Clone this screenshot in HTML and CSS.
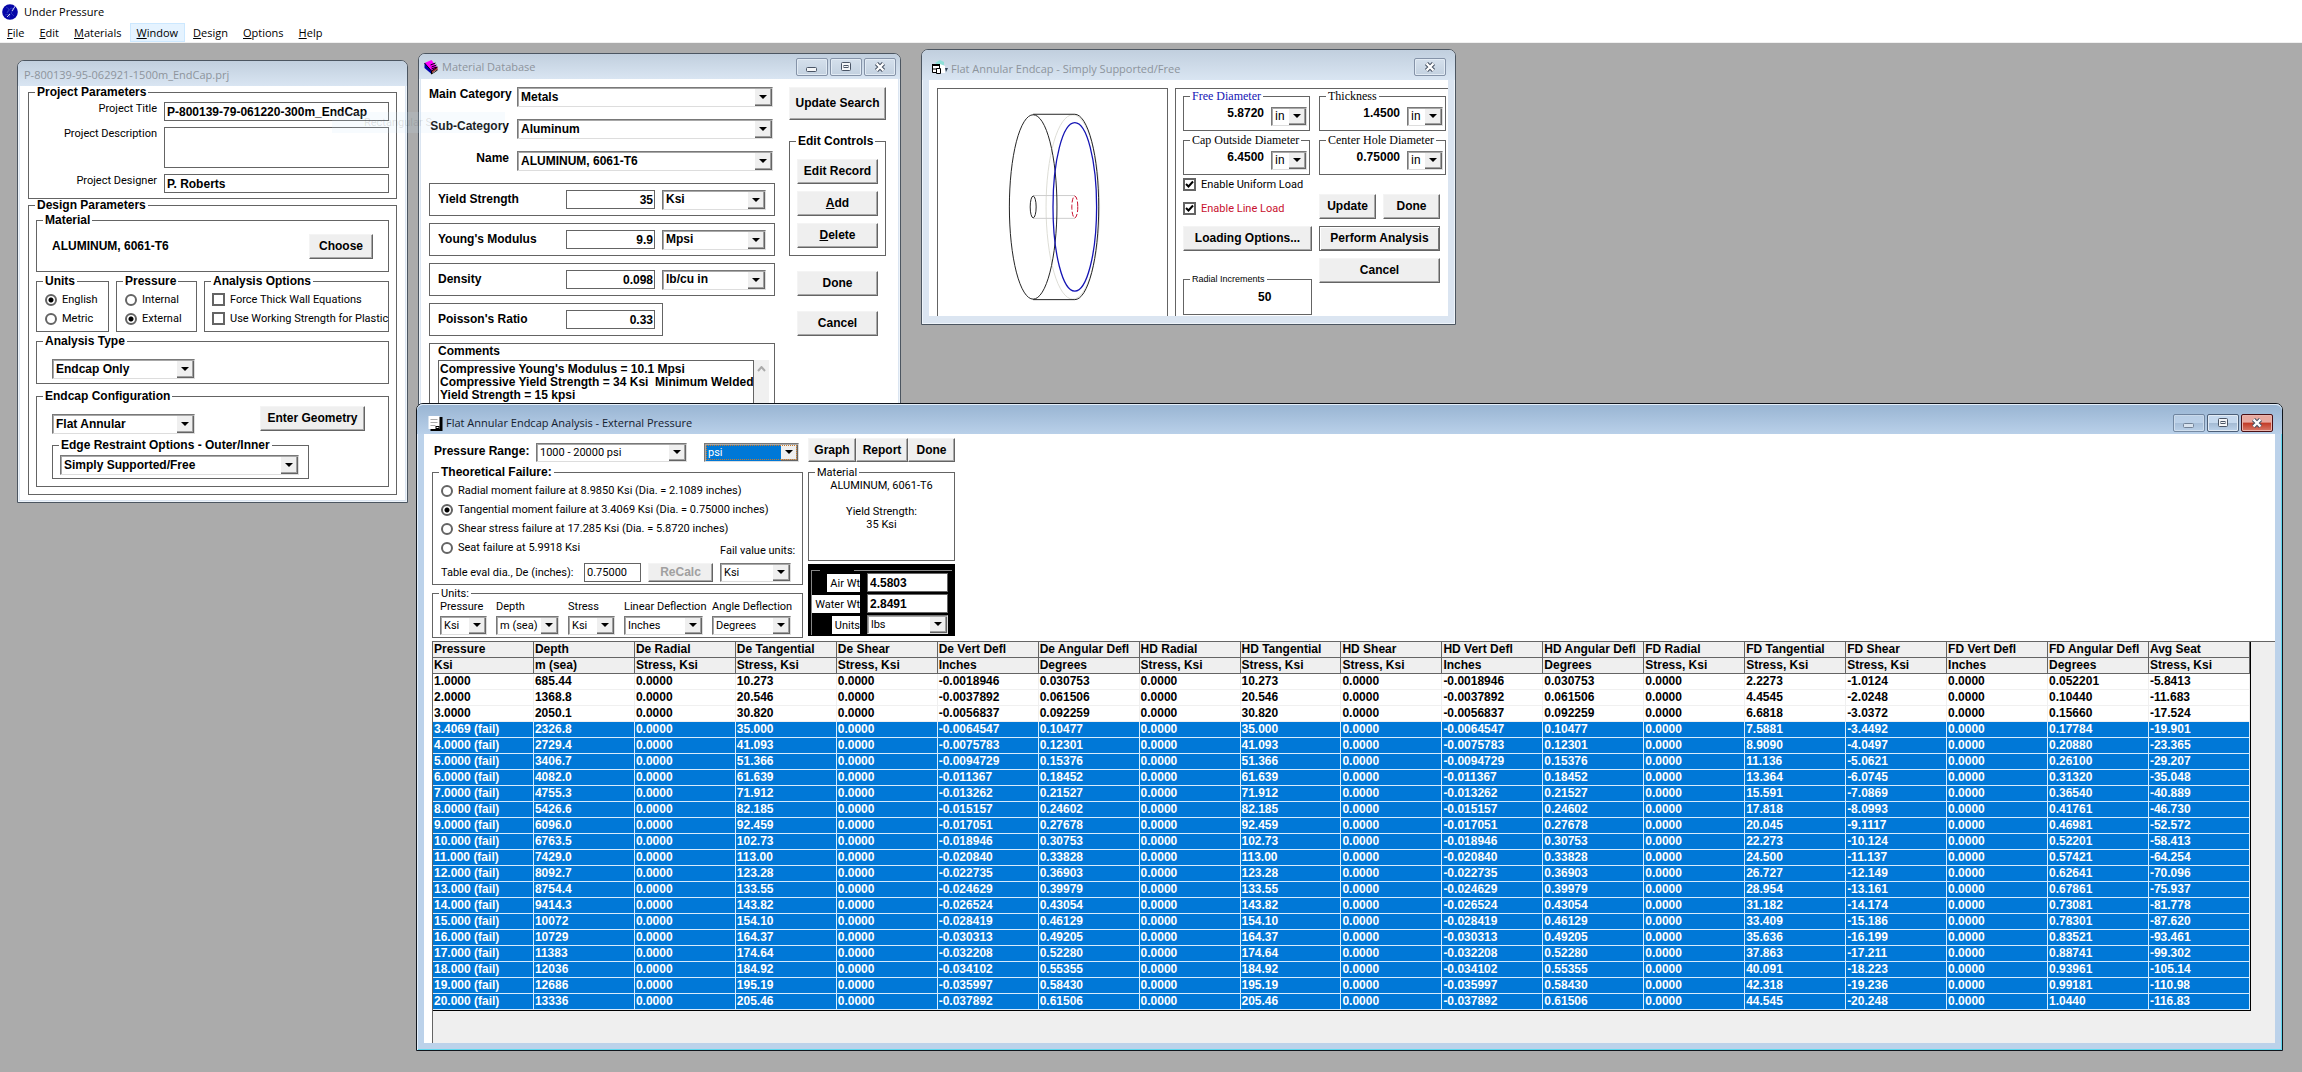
FILE: index.html
```html
<!DOCTYPE html>
<html lang="en">
<head>
<meta charset="utf-8">
<title>Under Pressure</title>
<link rel="stylesheet" href="styles.css">
</head>
<body>
<svg class="defs" aria-hidden="true">
  <symbol id="min" viewBox="0 0 14 12"><rect x="1.5" y="6.5" width="10" height="4" rx="1" fill="#f4f6f8" stroke="#4a5566"/></symbol>
  <symbol id="max" viewBox="0 0 14 12"><rect x="2.5" y="1.5" width="9" height="8" rx="1" fill="#f4f6f8" stroke="#4a5566"/><rect x="5" y="4.5" width="4" height="2" fill="none" stroke="#4a5566"/></symbol>
  <symbol id="cls" viewBox="0 0 14 12"><path d="M3.5 2.5L10.500 9.500M10.500 2.500L3.500 9.500" stroke="#4a5566" stroke-width="4.500"/><path d="M3.500 2.500L10.500 9.500M10.500 2.500L3.500 9.500" stroke="#fff" stroke-width="2.400"/></symbol>
</svg>

<header class="app-bar">
  <svg class="app-icon" viewBox="0 0 16 16"><circle cx="8" cy="8" r="7.800" fill="#0606a8"/><path d="M4 3l3 2-2 4 4-5 3 1-3 4 3 3M3 11l5-1-1 4" fill="none" stroke="#2a38b8"/><path d="M14 1l-4 6M5 13l3-3" stroke="#fff" stroke-width=".8"/></svg>
  <h1>Under Pressure</h1>
</header>
<nav class="menu">
  <button><u>F</u>ile</button><button><u>E</u>dit</button><button><u>M</u>aterials</button><button class="hot"><u>W</u>indow</button><button><u>D</u>esign</button><button><u>O</u>ptions</button><button><u>H</u>elp</button>
</nav>

<main class="desktop">
  <section class="win project">
    <div class="bar"><h2>P-800139-95-062921-1500m_EndCap.prj</h2></div>
    <form class="client">
      <fieldset class="details">
        <legend>Project Parameters</legend>
        <label for="title">Project Title</label><input id="title" value="P-800139-79-061220-300m_EndCap">
        <label for="desc">Project Description</label><textarea id="desc"></textarea>
        <label for="designer">Project Designer</label><input id="designer" value="P. Roberts">
      </fieldset>
      <fieldset class="design">
        <legend>Design Parameters</legend>
        <fieldset class="material-box"><legend>Material</legend><b>ALUMINUM, 6061-T6</b><button type="button">Choose</button></fieldset>
        <div class="trio">
          <fieldset><legend>Units</legend>
            <label class="opt"><input type="radio" name="sys" checked>English</label>
            <label class="opt"><input type="radio" name="sys">Metric</label></fieldset>
          <fieldset><legend>Pressure</legend>
            <label class="opt"><input type="radio" name="press">Internal</label>
            <label class="opt"><input type="radio" name="press" checked>External</label></fieldset>
          <fieldset><legend>Analysis Options</legend>
            <label class="opt"><input type="checkbox">Force Thick Wall Equations</label>
            <label class="opt"><input type="checkbox">Use Working Strength for Plastic</label></fieldset>
        </div>
        <fieldset class="type-box"><legend>Analysis Type</legend><select aria-label="Analysis Type"><option>Endcap Only</option></select></fieldset>
        <fieldset class="endcap-box"><legend>Endcap Configuration</legend>
          <div class="config"><select aria-label="Endcap Configuration"><option>Flat Annular</option></select><button type="button">Enter Geometry</button></div>
          <fieldset class="edge-box"><legend>Edge Restraint Options - Outer/Inner</legend><select aria-label="Edge Restraint"><option>Simply Supported/Free</option></select></fieldset>
        </fieldset>
      </fieldset>
    </form>
  </section>

  <section class="win database">
    <div class="bar">
      <svg class="ico" viewBox="0 0 15 16"><path d="M1 4l7-3 6 8-6 4z" fill="#f0f"/><path d="M1 4v5l7 6v-3z" fill="#00a"/><path d="M8 12l6-4v3l-6 4z" fill="#a33"/><path d="M7 6l5-2M8 8l5-2M8 10l5-2M1 4l7 8 6-4M8 12v3l6-4" fill="none" stroke="#000"/><path d="M9 14l4-3" stroke="#888"/></svg>
      <h2>Material Database</h2>
      <button aria-label="Minimize"><svg><use href="#min"/></svg></button><button aria-label="Maximize"><svg><use href="#max"/></svg></button><button aria-label="Close"><svg><use href="#cls"/></svg></button>
    </div>
    <form class="client">
      <div class="fields">
        <div class="lookup">
          <label for="cat">Main Category</label><select id="cat"><option>Metals</option></select>
          <label for="sub">Sub-Category</label><select id="sub"><option>Aluminum</option></select>
          <label for="name">Name</label><select id="name"><option>ALUMINUM, 6061-T6</option></select>
        </div>
        <div class="prop"><label for="ys">Yield Strength</label><input id="ys" value="35"><select aria-label="Yield unit"><option>Ksi</option></select></div>
        <div class="prop"><label for="ym">Young's Modulus</label><input id="ym" value="9.9"><select aria-label="Modulus unit"><option>Mpsi</option></select></div>
        <div class="prop"><label for="den">Density</label><input id="den" value="0.098"><select aria-label="Density unit"><option>lb/cu in</option></select></div>
        <div class="prop short"><label for="pr">Poisson's Ratio</label><input id="pr" value="0.33"></div>
        <div class="comments"><label for="com">Comments</label>
          <div class="memo"><textarea id="com">Compressive Young's Modulus = 10.1 Mpsi
Compressive Yield Strength = 34 Ksi  Minimum Welded
Yield Strength = 15 kpsi</textarea><div class="scroll"><svg viewBox="0 0 9 6"><path d="M1 5l3.500-4L8 5" fill="none" stroke="#aaa" stroke-width="2"/></svg></div></div></div>
      </div>
      <div class="actions">
        <button type="button" class="search">Update Search</button>
        <fieldset><legend>Edit Controls</legend><button type="button">Edit Record</button><button type="button"><u>A</u>dd</button><button type="button"><u>D</u>elete</button></fieldset>
        <div class="finish"><button type="button">Done</button><button type="button">Cancel</button></div>
      </div>
    </form>
  </section>

  <section class="win geometry">
    <div class="bar">
      <svg class="ico" viewBox="0 0 16 16"><path d="M3 3l5-3 4 2v3L8 7z" fill="#8fe0d8"/><path d="M8 4l5 2v7H8z" fill="#fff"/><path d="M13 8h3l-2 4z" fill="#345"/><path d="M.5 4.500h7v8h-7z" fill="#fff" stroke="#000"/><path d="M0 4h8v2H0z" fill="#000"/><path d="M1 9h4" stroke="#000"/><path d="M4.500 8.500h4v5h-4z" fill="#fff" stroke="#000"/></svg>
      <h2>Flat Annular Endcap - Simply Supported/Free</h2>
      <button aria-label="Close"><svg><use href="#cls"/></svg></button>
    </div>
    <form class="client">
      <div class="sketch">
        <svg viewBox="0 0 231 228" fill="none" stroke="#222">
          <ellipse cx="136" cy="119" rx="27" ry="93" stroke="#ddddd6"/>
          <path d="M96 107.500h42M96 130.500h42" stroke="#ccc"/>
          <path d="M96 25.500h42a24 93 0 0 1 0 187H96"/>
          <ellipse cx="96" cy="119" rx="24" ry="93"/>
          <ellipse cx="96" cy="119" rx="3" ry="11"/>
          <ellipse cx="138" cy="119" rx="22" ry="85" stroke="#1414b4" stroke-width="1.300"/>
          <ellipse cx="138" cy="119" rx="3" ry="11" stroke="#c8102e" stroke-dasharray="5 2"/>
        </svg>
      </div>
      <div class="params">
        <div class="dims">
          <fieldset><legend class="free">Free Diameter</legend><output>5.8720</output><select aria-label="Free Diameter unit"><option>in</option></select></fieldset>
          <fieldset><legend>Thickness</legend><output>1.4500</output><select aria-label="Thickness unit"><option>in</option></select></fieldset>
          <fieldset><legend>Cap Outside Diameter</legend><output>6.4500</output><select aria-label="Outside Diameter unit"><option>in</option></select></fieldset>
          <fieldset><legend>Center Hole Diameter</legend><output>0.75000</output><select aria-label="Hole Diameter unit"><option>in</option></select></fieldset>
        </div>
        <div class="loads">
          <div class="left">
            <label class="opt"><input type="checkbox" checked>Enable Uniform Load</label>
            <label class="opt red"><input type="checkbox" checked>Enable Line Load</label>
            <button type="button">Loading Options...</button>
            <fieldset><legend>Radial Increments</legend><output>50</output></fieldset>
          </div>
          <div class="right">
            <button type="button">Update</button><button type="button">Done</button>
            <button type="button" class="wide main">Perform Analysis</button>
            <button type="button" class="wide">Cancel</button>
          </div>
        </div>
      </div>
    </form>
  </section>

  <section class="win analysis">
    <div class="bar">
      <svg class="ico" viewBox="0 0 15 16"><path d="M3 2h12v14H3z" fill="#000"/><path d="M1 1h11v13H1z" fill="#fff"/><path d="M3 4.500h7M3 7.500h7M3 10.500h5" stroke="#aaa"/><path d="M8 11h4v3H8z" fill="#000"/><path d="M9 12h2v1H9z" fill="#fff"/></svg>
      <h2>Flat Annular Endcap Analysis - External Pressure</h2>
      <button aria-label="Minimize" class="dim"><svg><use href="#min"/></svg></button><button aria-label="Maximize"><svg><use href="#max"/></svg></button><button aria-label="Close" class="close"><svg><use href="#cls"/></svg></button>
    </div>
    <div class="client">
      <form class="controls">
        <div class="main-col">
          <div class="range"><label for="range">Pressure Range:</label><select id="range"><option>1000 - 20000 psi</option></select><span class="picked"><select aria-label="Range unit"><option>psi</option></select></span></div>
          <fieldset class="failure"><legend>Theoretical Failure:</legend>
            <label class="opt"><input type="radio" name="fail">Radial moment failure at 8.9850 Ksi (Dia. = 2.1089 inches)</label>
            <label class="opt"><input type="radio" name="fail" checked>Tangential moment failure at 3.4069 Ksi (Dia. = 0.75000 inches)</label>
            <label class="opt"><input type="radio" name="fail">Shear stress failure at 17.285 Ksi (Dia. = 5.8720 inches)</label>
            <div class="eval">
              <label class="opt"><input type="radio" name="fail">Seat failure at 5.9918 Ksi</label>
              <label for="fvu" class="fvu">Fail value units:</label>
              <div class="recalc"><label for="de">Table eval dia., De (inches):</label><input id="de" value="0.75000"><button type="button" disabled>ReCalc</button></div>
              <select id="fvu"><option>Ksi</option></select>
            </div>
          </fieldset>
          <fieldset class="units"><legend>Units:</legend>
            <label>Pressure<select><option>Ksi</option></select></label>
            <label>Depth<select><option>m (sea)</option></select></label>
            <label>Stress<select><option>Ksi</option></select></label>
            <label>Linear Deflection<select><option>Inches</option></select></label>
            <label>Angle Deflection<select><option>Degrees</option></select></label>
          </fieldset>
        </div>
        <div class="side-col">
          <div class="tools"><button type="button">Graph</button><button type="button">Report</button><button type="button">Done</button></div>
          <fieldset class="summary"><legend>Material</legend><p>ALUMINUM, 6061-T6</p><p>Yield Strength:<br>35 Ksi</p></fieldset>
          <div class="weights">
            <div class="weights-grid">
              <label for="air">Air Wt</label><input id="air" value="4.5803">
              <label for="water">Water Wt</label><input id="water" value="2.8491">
              <label for="wu">Units</label><select id="wu"><option>lbs</option></select>
            </div>
          </div>
        </div>
      </form>
      <div class="grid">
        <table>
          <thead></thead>
          <tbody></tbody>
        </table>
      </div>
    </div>
  </section>
  <div class="ghost" aria-hidden="true">Rectangular S</div>
</main>
<script src="table.js"></script>
</body>
</html>
```
FILE: styles.css
```css
* { box-sizing: border-box; }
body { --strong: "Liberation Sans", Arial, sans-serif; --light: Roboto, "Liberation Sans", sans-serif; margin: 0; min-height: 100vh; display: flex; flex-direction: column; background: #fff; color: #000; font: 11px/13px var(--light); }
h1, h2, p { margin: 0; font-weight: normal; }
.defs { display: none; }
button, input, select, textarea { margin: 0; border-radius: 0; font: bold 12px/13px var(--strong); color: #000; }
/* --pad is the left padding; the legend is pulled back over it */
fieldset { --pad: 0px; margin: 0; padding: 0 0 0 var(--pad); min-width: 0; border: 1px solid #646464; }
legend { margin-left: calc(6px - var(--pad)); padding: 0 2px; font: bold 12px/13px var(--strong); text-align: left; white-space: nowrap; }
b, output { font: bold 12px/13px var(--strong); }

.app-bar { display: flex; align-items: center; gap: 6px; height: 23px; padding: 0 2px; }
.app-icon { width: 16px; height: 16px; }
h1, h2, .menu button { font: 11px/16px "Open Sans", "Noto Sans", sans-serif; }
.menu { display: flex; gap: 1px; height: 20px; border-bottom: 1px solid #f0f0f0; }
.menu button { padding: 0 7px; border: 0; background: none; }
.menu .hot { background: #e5f3ff; box-shadow: inset 0 0 0 1px #cce8ff; }

.desktop { position: relative; flex: 1; overflow: hidden; background: #ababab; }
.win { position: absolute; border: 1px solid #4c5661; border-radius: 7px 7px 0 0; background: #dbe5f1; box-shadow: inset 0 0 0 1px #eef4fa; }
.bar { display: flex; align-items: center; height: 25px; padding: 0 4px; gap: 2px; border-radius: 6px 6px 0 0; background: linear-gradient(#c1cfde, #d9e5f2); }
.bar h2 { flex: 1; color: #8d949c; white-space: nowrap; }
.bar .ico { width: 16px; height: 16px; margin-right: 1px; }
.bar button { display: grid; place-items: center; width: 32px; height: 18px; padding: 0; border: 1px solid #8593a8; border-radius: 2px; background: linear-gradient(#d5e0ec, #c3d1e0); box-shadow: inset 0 0 0 1px #e2ebf4; }
.bar button svg { width: 14px; height: 12px; }
.client { background: #fff; }

.client button { height: 25px; padding: 0; border: 1px solid; border-color: #f4f4f4 #646464 #646464 #f4f4f4; background: #efefef; box-shadow: inset -1px -1px #a8a8a8; white-space: nowrap; }
.client button:disabled { color: #a0a0a0; }
.client input, textarea { height: 19px; padding: 0 2px; border: 1px solid #646464; background: #fff; outline: 0; }
textarea { resize: none; overflow: hidden; }
select { appearance: none; height: 20px; padding: 0 18px 0 3px; border: 1px solid; border-color: #787878 #ddd #ddd #787878; box-shadow: inset 1px 1px #a8a8a8;
  background: #fff url("data:image/svg+xml,%3Csvg xmlns='http://www.w3.org/2000/svg' width='17' height='17'%3E%3Cpath fill='%23efefef' d='M0 0h17v17H0z'/%3E%3Cpath fill='%23646464' d='M15 0h2v17H0v-2h15z'/%3E%3Cpath fill='%23a0a0a0' d='M15 0h1v16H0v-1h15z'/%3E%3Cpath d='M4 6h8L8 10z'/%3E%3C/svg%3E") no-repeat right 0 bottom 0; }
.opt { display: flex; align-items: center; height: 19px; gap: 5px; white-space: nowrap; }
.client .opt input { appearance: none; flex: none; width: 12px; height: 12px; padding: 0; border: 2px solid #646464; }
.client .opt input[type=radio] { border-radius: 50%; }
.opt input[type=radio]:checked { background: radial-gradient(circle, #000 2px, #fff 3px); }
.client .opt input[type=checkbox] { width: 13px; height: 13px; }
.opt input[type=checkbox]:checked { background: #fff url("data:image/svg+xml,%3Csvg xmlns='http://www.w3.org/2000/svg' width='9' height='9'%3E%3Cpath fill='none' stroke='%23000' stroke-width='2' d='M1 4l2.500 2.500L8 1.500'/%3E%3C/svg%3E") center no-repeat; }

/* Project window */
.project { top: 17px; left: 17px; width: 391px; }
.project .bar h2 { padding: 3px 0 0 2px; }
.project .client { margin: 0 2px 2px; padding: 0 8px 5px; }
.details { display: grid; grid-template-columns: 1fr 225px; gap: 6px 7px; padding: 3px 7px 5px 0; text-align: right; }
.details textarea { height: 41px; }
.design { --pad: 7px; display: grid; gap: 3px; padding: 2px 7px 7px; }
.material-box { --pad: 15px; display: flex; justify-content: space-between; align-items: center; padding: 7px 15px 12px; }
.material-box button { width: 64px; }
.trio { display: grid; grid-template-columns: 73px 81px 185px; gap: 7px; }
.trio fieldset { --pad: 8px; padding: 2px 0 3px 8px; }
.trio fieldset:last-child { --pad: 7px; padding-left: 7px; }
.type-box { --pad: 15px; padding: 11px 15px 4px; }
.type-box select, .config select { width: 143px; }
.endcap-box { --pad: 15px; margin-top: 3px; padding: 3px 23px 7px 15px; }
.config { display: flex; justify-content: space-between; align-items: flex-start; }
.config select { margin-top: 8px; }
.config button { width: 105px; }
.edge-box { --pad: 7px; width: 257px; margin-top: 5px; padding: 3px 7px; }
.edge-box select { display: block; width: 239px; }

/* Material database window */
.database { top: 10px; left: 418px; width: 483px; }
.database .client { display: flex; gap: 15px; margin: 0 2px 2px; padding: 8px 12px 8px 8px; font: bold 12px/13px var(--strong); }
.fields { display: grid; gap: 7px; width: 345px; }
.lookup { display: grid; grid-template-columns: 80px 256px; gap: 12px 8px; margin-bottom: 5px; text-align: right; white-space: nowrap; }
.lookup label { padding-top: 1px; }
.prop { display: flex; align-items: center; height: 33px; padding: 0 8px; border: 1px solid #646464; }
.prop label { width: 128px; }
.prop input { width: 89px; padding: 0 1px; text-align: right; }
.prop select { flex: 1; margin-left: 7px; }
.prop.short { width: 234px; padding-right: 7px; }
.comments { padding: 1px 5px 8px 8px; border: 1px solid #646464; }
.memo { display: flex; margin-top: 2px; }
.memo textarea { width: 316px; height: 60px; padding: 2px 0 2px 1px; white-space: pre; }
.scroll { width: 15px; background: #f0f0f0; text-align: center; }
.scroll svg { width: 9px; height: 6px; margin-top: 6px; }
.actions { flex: 1; }
.actions button { display: block; width: 81px; }
.actions .search { width: 97px; height: 33px; }
.actions fieldset { --pad: 7px; display: grid; gap: 7px; margin-top: 15px; padding: 11px 7px 7px; }
.finish { display: grid; gap: 15px; margin: 15px 0 0 8px; }

/* Geometry window */
.geometry { top: 6px; left: 921px; width: 535px; padding-bottom: 8px; }
.geometry .bar { height: 30px; padding: 8px 9px 0 10px; align-items: flex-start; }
.geometry .bar h2 { padding-top: 3px; }
.geometry .bar .ico { margin-top: 2px; }
.geometry .client { display: flex; gap: 7px; height: 236px; margin: 0 7px; padding: 8px 0 0 8px; overflow: hidden; }
.sketch { width: 231px; border: 1px solid #646464; border-bottom: 0; }
.sketch svg { display: block; width: 229px; height: 226px; }
.params { flex: 1; padding: 1px 0 0 7px; border: solid #646464; border-width: 1px 0 0 1px; }
.dims { display: grid; grid-template-columns: 127px 127px; gap: 3px 9px; }
.dims fieldset { display: flex; justify-content: flex-end; gap: 7px; padding: 4px 2px 4px 0; }
.dims legend { font: 12px/13px "Liberation Serif", "Times New Roman", serif; }
.dims .free { color: #1414b4; }
.dims select { width: 36px; height: 19px; font: 12px/13px var(--light); }
.loads { display: flex; gap: 7px; margin-top: 3px; }
.left { display: grid; gap: 11px; width: 129px; align-content: start; }
.left .opt { height: 13px; }
.red { color: #c8102e; }
.left fieldset { --pad: 74px; margin-top: 11px; padding: 5px 0 10px 74px; }
.left legend { font: 9px/13px var(--strong); }
.right { display: grid; grid-template-columns: 57px 57px; gap: 7px; margin-top: 16px; align-content: start; }
.wide { grid-column: span 2; }
.client .main { border-color: #646464; box-shadow: inset 1px 1px #fff, inset -1px -1px #787878; }

/* Analysis window */
.analysis { top: 360px; left: 416px; right: 19px; bottom: 21px; display: flex; flex-direction: column; padding-bottom: 7px; border-color: #10151c; background: #bcd2ea; box-shadow: inset 1px 1px #e6f0fa, inset -1px -1px #5fd8ee; }
.analysis .bar { flex: none; height: 30px; padding: 8px 9px 0 10px; background: linear-gradient(#98b4d2, #b9d0e9); box-shadow: inset 0 1px #e6f0fa; }
.analysis .bar h2 { color: #14202e; }
.analysis .bar button { background: linear-gradient(#c6d9ee 50%, #a3bad3 50%, #bcd2ea); border-color: #4c5f78; }
.analysis .bar .dim { opacity: .6; }
.analysis .bar .close { background: linear-gradient(#e8a9a0 45%, #c23a26 50%, #d87a6a); border-color: #4a1015; box-shadow: inset 0 0 0 1px #eab4ac; }
.analysis .client { flex: 1; display: flex; flex-direction: column; min-height: 0; margin: 0 7px; padding-left: 8px; }
.controls { display: flex; gap: 5px; }
.analysis select, .failure input { height: 19px; font: 11px/13px var(--light); }
.main-col { width: 371px; padding-top: 9px; }
.range { display: flex; margin-bottom: 4px; }
.range label { width: 104px; padding: 2px 0 0 2px; font: bold 12px/13px var(--strong); white-space: nowrap; }
.range > select { width: 151px; margin-right: 17px; }
.picked { width: 95px; }
.picked select { width: 100%; color: #fff; background-color: #0078d7; outline: 1px dotted #c87a2a; outline-offset: -3px; }
.failure { --pad: 8px; padding: 2px 11px 2px 8px; }
.eval { display: grid; grid-template-columns: 1fr 71px; gap: 6px 7px; }
.eval .fvu { align-self: end; white-space: nowrap; }
.recalc { display: flex; align-items: center; }
.recalc label { width: 143px; white-space: nowrap; }
.recalc input { width: 57px; }
.recalc button { width: 65px; height: 19px; margin-left: 7px; }
.units { --pad: 7px; display: grid; grid-template-columns: 47px 63px 47px 79px 79px; gap: 9px; padding: 0 7px 2px; margin-top: 2px; white-space: nowrap; }
.units legend, .summary legend { font: 11px/13px var(--light); }
.units select { display: block; width: 100%; margin-top: 3px; }
.side-col { width: 147px; padding-top: 4px; }
.tools { display: grid; grid-template-columns: 48px 52px 47px; margin-bottom: 4px; }
.tools button { height: 24px; }
.summary { padding-bottom: 29px; text-align: center; }
.summary p + p { margin-top: 13px; }
.weights { margin-top: 3px; padding: 6px 3px 1px; background: #000; }
.weights-grid { display: grid; grid-template-columns: 48px 81px; justify-content: space-between; gap: 2px; padding: 3px 4px 1px 0; border-left: 1px solid #888; background: linear-gradient(90deg, #888 8px, #000 8px 42px, #888 42px) top / 100% 1px no-repeat; }
.weights label { justify-self: end; align-self: center; padding: 3px 0 2px 3px; background: #fff; white-space: nowrap; }
.weights input, .weights select { width: 81px; }
.grid { flex: 1; margin-top: 3px; overflow: hidden; border: solid #646464; border-width: 1px 0 0 1px; background: #efefef; }
table { width: 1818px; table-layout: fixed; border-spacing: 0; border-right: 1px solid #000; border-bottom: 1px solid #000; font: bold 12px/15px var(--strong); text-align: left; white-space: nowrap; }
th, td { height: 16px; padding: 0 1px; overflow: hidden; border: solid #646464; border-width: 0 1px 1px 0; }
td { border-color: #f0f0f0; background: #fff; }
.fail td { color: #fff; background: #0078d7; border-color: #d8ecfc; }

/* Fading menu entry */
.ghost { position: absolute; top: 69px; left: 332px; width: 173px; height: 21px; padding: 4px 32px; background: rgba(200, 225, 250, .15); color: rgba(60, 60, 60, .15); }
```
FILE: table.js
```js
const points = ['De', 'HD', 'FD'];
const parts = [['Radial', 'Stress, Ksi'], ['Tangential', 'Stress, Ksi'], ['Shear', 'Stress, Ksi'], ['Vert Defl', 'Inches'], ['Angular Defl', 'Degrees']];
const columns = [['Pressure', 'Ksi'], ['Depth', 'm (sea)']];
points.forEach(p => parts.forEach(([name, unit]) => columns.push([p + ' ' + name, unit])));
columns.push(['Avg Seat', 'Stress, Ksi']);

// pressure, depth, tangential, vertical, angular, FD tangential, FD shear, FD angular, seat
const results = `1.0000 685.44 10.273 -0.0018946 0.030753 2.2273 -1.0124 0.052201 -5.8413
2.0000 1368.8 20.546 -0.0037892 0.061506 4.4545 -2.0248 0.10440 -11.683
3.0000 2050.1 30.820 -0.0056837 0.092259 6.6818 -3.0372 0.15660 -17.524
3.4069 2326.8 35.000 -0.0064547 0.10477 7.5881 -3.4492 0.17784 -19.901
4.0000 2729.4 41.093 -0.0075783 0.12301 8.9090 -4.0497 0.20880 -23.365
5.0000 3406.7 51.366 -0.0094729 0.15376 11.136 -5.0621 0.26100 -29.207
6.0000 4082.0 61.639 -0.011367 0.18452 13.364 -6.0745 0.31320 -35.048
7.0000 4755.3 71.912 -0.013262 0.21527 15.591 -7.0869 0.36540 -40.889
8.0000 5426.6 82.185 -0.015157 0.24602 17.818 -8.0993 0.41761 -46.730
9.0000 6096.0 92.459 -0.017051 0.27678 20.045 -9.1117 0.46981 -52.572
10.000 6763.5 102.73 -0.018946 0.30753 22.273 -10.124 0.52201 -58.413
11.000 7429.0 113.00 -0.020840 0.33828 24.500 -11.137 0.57421 -64.254
12.000 8092.7 123.28 -0.022735 0.36903 26.727 -12.149 0.62641 -70.096
13.000 8754.4 133.55 -0.024629 0.39979 28.954 -13.161 0.67861 -75.937
14.000 9414.3 143.82 -0.026524 0.43054 31.182 -14.174 0.73081 -81.778
15.000 10072 154.10 -0.028419 0.46129 33.409 -15.186 0.78301 -87.620
16.000 10729 164.37 -0.030313 0.49205 35.636 -16.199 0.83521 -93.461
17.000 11383 174.64 -0.032208 0.52280 37.863 -17.211 0.88741 -99.302
18.000 12036 184.92 -0.034102 0.55355 40.091 -18.223 0.93961 -105.14
19.000 12686 195.19 -0.035997 0.58430 42.318 -19.236 0.99181 -110.98
20.000 13336 205.46 -0.037892 0.61506 44.545 -20.248 1.0440 -116.83`.split('\n').map(line => line.split(' '));

const yieldPoint = 3.4069;
const addRow = (body, tag, cells) => {
  const row = body.insertRow();
  cells.forEach(text => {
    const cell = document.createElement(tag);
    cell.textContent = text;
    row.append(cell);
  });
  return row;
};

const head = document.querySelector('thead');
addRow(head, 'th', columns.map(c => c[0]));
addRow(head, 'th', columns.map(c => c[1]));

const body = document.querySelector('tbody');
const none = '0.0000';
results.forEach(([p, depth, tang, vert, ang, fdTang, fdShear, fdAng, seat]) => {
  const failed = parseFloat(p) >= yieldPoint;
  const row = addRow(body, 'td', [failed ? p + ' (fail)' : p, depth,
    none, tang, none, vert, ang,
    none, tang, none, vert, ang,
    none, fdTang, fdShear, none, fdAng, seat]);
  if (failed) row.className = 'fail';
});
```
